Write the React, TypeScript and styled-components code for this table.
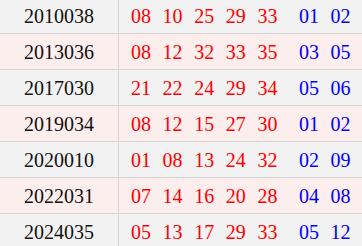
import React from "react";
import styled, { createGlobalStyle } from "styled-components";

const GlobalStyle = createGlobalStyle`
  html, body {
    margin: 0;
    padding: 0;
    background: #fdeeee;
    overflow: hidden;
  }
`;

const Table = styled.div`
  margin-top: -2px;
  font-family: "Liberation Serif", "Times New Roman", serif;
  font-size: 20px;
`;

const Row = styled.div<{ $alt: boolean }>`
  display: grid;
  grid-template-columns: 119px 1fr;
  height: 35px;
  border-bottom: 1px solid #d3d3d3;
  background: ${(p) => (p.$alt ? "#f2f2f2" : "#fdeeee")};
`;

const IssueCell = styled.div`
  display: flex;
  align-items: center;
  justify-content: center;
  border-right: 1px solid #d3d3d3;
  color: #111;
  padding-top: 1px;
`;

const BallCell = styled.div`
  display: flex;
  align-items: center;
  padding-left: 12px;
  padding-top: 1px;
  white-space: nowrap;
`;

const Ball = styled.span<{ $blue?: boolean }>`
  color: ${(p) => (p.$blue ? "#0000ff" : "#ff0000")};
  margin-right: 11.6px;
`;

const Gap = styled.span`
  display: inline-block;
  width: 10px;
`;

const draws = [
  { issue: "2010038", red: ["08", "10", "25", "29", "33"], blue: ["01", "02"] },
  { issue: "2013036", red: ["08", "12", "32", "33", "35"], blue: ["03", "05"] },
  { issue: "2017030", red: ["21", "22", "24", "29", "34"], blue: ["05", "06"] },
  { issue: "2019034", red: ["08", "12", "15", "27", "30"], blue: ["01", "02"] },
  { issue: "2020010", red: ["01", "08", "13", "24", "32"], blue: ["02", "09"] },
  { issue: "2022031", red: ["07", "14", "16", "20", "28"], blue: ["04", "08"] },
  { issue: "2024035", red: ["05", "13", "17", "29", "33"], blue: ["05", "12"] },
];

const App: React.FC = () => {
  return (
    <>
      <GlobalStyle />
      <Table>
        {draws.map((d, i) => (
          <Row key={d.issue} $alt={i % 2 === 0}>
            <IssueCell>{d.issue}</IssueCell>
            <BallCell>
              {d.red.map((n, j) => (
                <Ball key={"r" + j}>{n}</Ball>
              ))}
              <Gap />
              {d.blue.map((n, j) => (
                <Ball key={"b" + j} $blue>
                  {n}
                </Ball>
              ))}
            </BallCell>
          </Row>
        ))}
      </Table>
    </>
  );
};

export default App;
